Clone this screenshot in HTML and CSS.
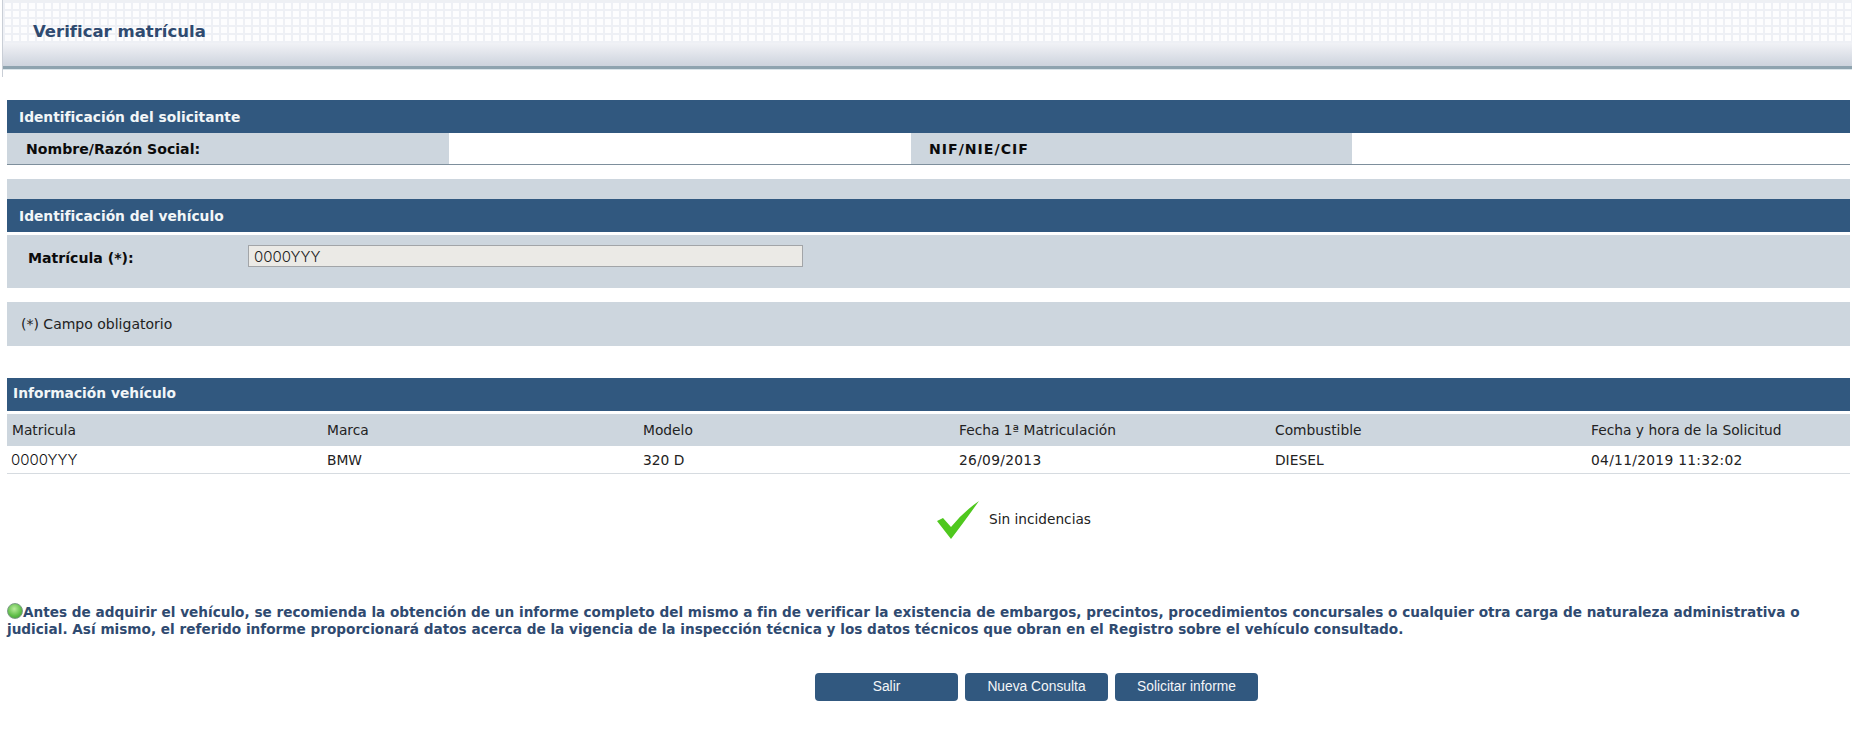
FILE: index.html
```html
<!DOCTYPE html>
<html lang="es">
<head>
<meta charset="utf-8">
<title>Verificar matrícula</title>
<link rel="stylesheet" href="styles.css">
</head>
<body>
<header class="page-head">
  <div class="page-grid"><h1>Verificar matrícula</h1></div>
  <div class="page-fade"></div>
</header>
<main class="content">
  <section class="block-applicant">
    <h2 class="bar">Identificación del solicitante</h2>
    <div class="applicant-row">
      <div class="lab lab-name">Nombre/Razón Social:</div>
      <div class="val"></div>
      <div class="lab lab-nif">NIF/NIE/CIF</div>
      <div class="val"></div>
    </div>
  </section>
  <div class="spacer-band"></div>
  <section>
    <h2 class="bar">Identificación del vehículo</h2>
    <div class="plate-row">
      <label class="plate-label" for="plate">Matrícula (*):</label>
      <input class="plate-input" id="plate" value="0000YYY" readonly>
    </div>
  </section>
  <div class="note">(*) Campo obligatorio</div>
  <section class="block-info">
    <h2 class="bar bar-info">Información vehículo</h2>
    <table class="info">
      <thead>
        <tr><th>Matricula</th><th>Marca</th><th>Modelo</th><th>Fecha 1ª Matriculación</th><th>Combustible</th><th>Fecha y hora de la Solicitud</th></tr>
      </thead>
      <tbody>
        <tr><td class="plate-cell">0000YYY</td><td>BMW</td><td>320 D</td><td class="num">26/09/2013</td><td>DIESEL</td><td class="num">04/11/2019 11:32:02</td></tr>
      </tbody>
    </table>
  </section>
  <div class="result">
    <svg class="check" width="44" height="42" viewBox="0 0 44 42" aria-hidden="true">
      <path d="M1 22 L7 19 L15 28 Q27 13 43 2 Q31 19 15 40 Z" fill="#4fc81e"/>
    </svg>
    <span>Sin incidencias</span>
  </div>
  <p class="advice"><span class="dot"></span>Antes de adquirir el vehículo, se recomienda la obtención de un informe completo del mismo a fin de verificar la existencia de embargos, precintos, procedimientos concursales o cualquier otra carga de naturaleza administrativa o judicial. Así mismo, el referido informe proporcionará datos acerca de la vigencia de la inspección técnica y los datos técnicos que obran en el Registro sobre el vehículo consultado.</p>
  <div class="actions">
    <button class="btn" type="button">Salir</button>
    <button class="btn" type="button">Nueva Consulta</button>
    <button class="btn" type="button">Solicitar informe</button>
  </div>
</main>
</body>
</html>
```
FILE: styles.css
```css
* { box-sizing: border-box; }
html, body { margin: 0; padding: 0; background: #fff; }
body { font-family: "DejaVu Sans", Verdana, sans-serif; font-size: 12px; color: #111; height: 731px; overflow: hidden; }

.page-head { margin-left: 2px; height: 77px; border-left: 1px solid #c9ced6; }
.page-grid {
  height: 43px; margin-top: 0; padding: 0 0 0 30px;
  border-top: 2px solid #eef0f4;
  background-color: #fdfdfe;
  background-image:
    repeating-linear-gradient(90deg, #eef0f5 0 2px, transparent 2px 8px),
    repeating-linear-gradient(0deg, #eef0f5 0 2px, transparent 2px 8px);
  display: flex; align-items: center;
}
.page-grid h1 { margin: 18px 0 0; font-size: 16.5px; font-weight: bold; color: #2f4a70; }
.page-fade {
  height: 26px;
  background: linear-gradient(#f1f2f6, #cdd3dd);
  border-bottom: 3px solid #8ea3af;
  box-shadow: 0 1px 0 #dbe5ea;
}

.content { padding: 23px 2px 0 7px; }
.bar { margin: 0; height: 33px; line-height: 34px; padding-left: 12px; background: #31587f; color: #f2f6f8; font-size: 13.8px; font-weight: bold; }
.bar-info { padding-left: 6px; line-height: 31px; }

.applicant-row { display: grid; grid-template-columns: 442px 462px 441px 1fr; height: 32px; border-bottom: 1px solid #7e8f9c; }
.lab { background: #cdd6de; font-weight: bold; font-size: 14.1px; color: #0b0b0b; line-height: 33px; height: 31px; }
.lab-name { padding-left: 19px; }
.lab-nif { padding-left: 18px; letter-spacing: 1px; }
.val { background: #fff; }

.spacer-band { margin-top: 14px; height: 20px; background: #cdd6de; }

.plate-row { margin-top: 3px; height: 53px; background: #cdd6de; display: flex; align-items: flex-start; padding: 10px 0 0 21px; }
.plate-label { width: 220px; flex: none; font-weight: bold; font-size: 14.1px; line-height: 26px; color: #0b0b0b; }
.plate-input {
  width: 555px; height: 22px; padding: 1px 5px 0; margin: 0;
  background: #ebeae6; border: 1px solid #a2a5a8; border-radius: 0; outline: 0;
  font-family: "Inter", sans-serif; font-weight: 300; font-size: 15px; color: #222;
}

.note { margin-top: 14px; height: 44px; line-height: 45px; padding-left: 14px; background: #cdd6de; font-size: 14px; color: #222; }

.block-info { margin-top: 32px; }
.info { margin-top: 3px; width: 100%; border-collapse: collapse; table-layout: fixed; font-size: 13.8px; color: #222; }
.info th, .info td { width: 316px; padding: 0 0 0 4px; text-align: left; font-weight: normal; white-space: nowrap; }
.info th:first-child { padding-left: 5px; }
.info th:last-child, .info td:last-child { width: 263px; }
.info th { height: 32px; background: #cdd6de; }
.info td { height: 27px; padding-top: 1px; border-bottom: 1px solid #d6dbe0; }
.info .num { letter-spacing: 0.3px; }
.info .plate-cell { padding-left: 4px; font-family: "Inter", sans-serif; font-weight: 300; font-size: 15px; color: #111; }

.result { margin: 25px 0 0 929px; height: 40px; display: flex; align-items: flex-start; }
.check { flex: none; }
.result span { margin: 12px 0 0 9px; font-size: 13.7px; color: #222; }

.advice { margin: 65px 0 0; width: 1836px; font-size: 13.64px; line-height: 17px; font-weight: bold; color: #2f4a70; }
.dot {
  display: inline-block; width: 16px; height: 16px; border-radius: 50%; vertical-align: 2px; margin: -4px 0;
  background: radial-gradient(circle at 45% 35%, #b9ec9c, #5cbc46 60%, #3f8f38);
  border: 1px solid #7b9a86;
}

.actions { margin: 35px 0 0 808px; display: flex; gap: 7px; }
.btn {
  width: 143px; height: 28px; padding: 0; border: 0; border-radius: 4px;
  background: #31587f; color: #f4f6f8; font-family: "Liberation Sans", Arial, sans-serif; font-size: 13.8px;
}
```
